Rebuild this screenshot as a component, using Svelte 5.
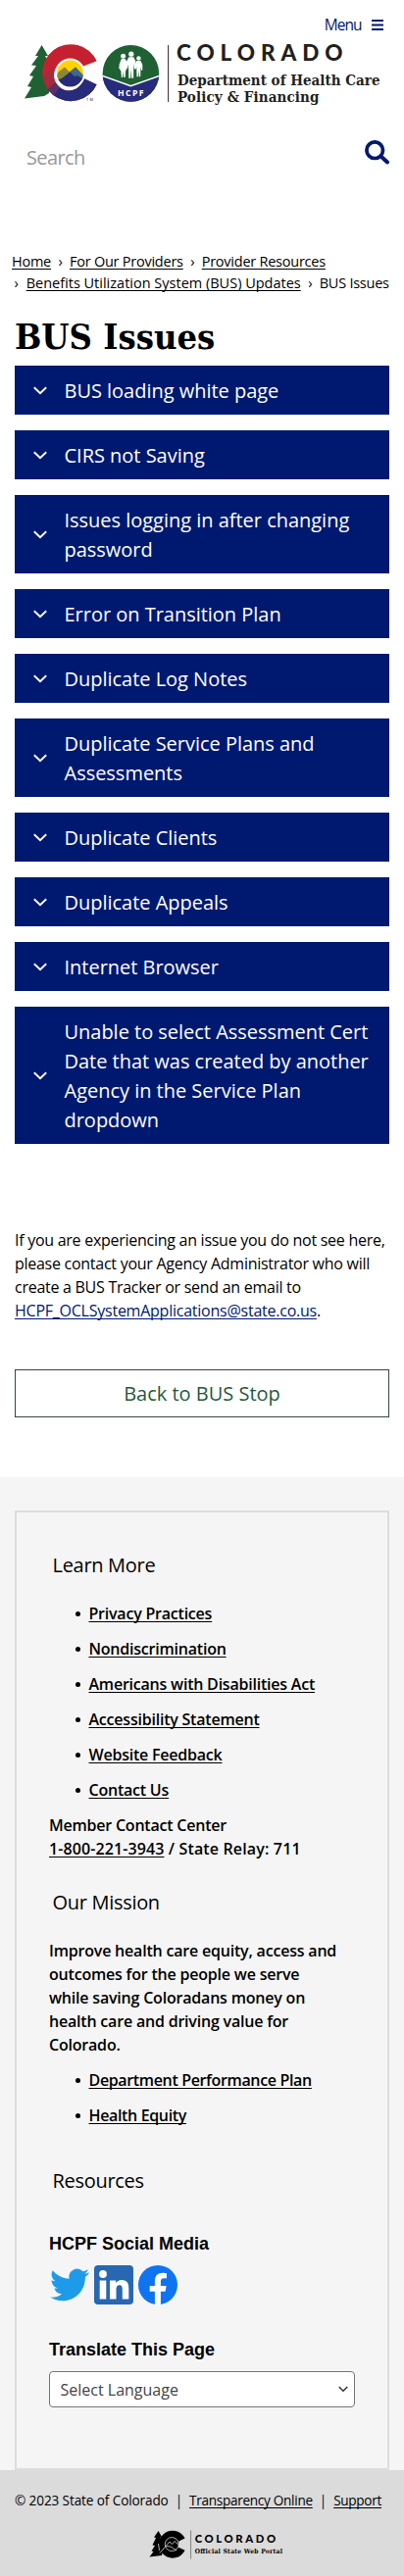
<script>
  const issues = [
    'BUS loading white page',
    'CIRS not Saving',
    'Issues logging in after changing password',
    'Error on Transition Plan',
    'Duplicate Log Notes',
    'Duplicate Service Plans and Assessments',
    'Duplicate Clients',
    'Duplicate Appeals',
    'Internet Browser',
    'Unable to select Assessment Cert Date that was created by another Agency in the Service Plan dropdown'
  ];
  const links = [
    'Privacy Practices',
    'Nondiscrimination',
    'Americans with Disabilities Act',
    'Accessibility Statement',
    'Website Feedback',
    'Contact Us'
  ];
  const missionLinks = ['Department Performance Plan', 'Health Equity'];
</script>

<header>
  <button class="menu">
    Menu
    <svg width="12" height="11" viewBox="0 0 12 11"><path d="M0 1h12M0 5.5h12M0 10h12" stroke="#001970" stroke-width="1.9" /></svg>
  </button>

  <svg class="logo" width="366" height="62" viewBox="25 45 366 62" role="img" aria-label="Colorado Department of Health Care Policy and Financing">
    <path d="M42.6 46 L49 57 L46 57 L51 66 L48 67 L52 78 L50 95 L45 98 L25 100.5 L32 89 L28 88 L34 78 L30 77 L37 67 L32 66.5 L39 57 L36 57Z" fill="#1f6132" />
    <clipPath id="cshape"><path d="M98.7 62.3 A29 29 0 1 0 98.6 86.2 L85.5 80 A15.4 15.4 0 1 1 83 68.2Z" /></clipPath>
    <g clip-path="url(#cshape)">
      <rect x="40" y="44" width="62" height="62" fill="#c5202f" />
      <path d="M42 79 L52 70 L62 82 L48 94 L40 98Z" fill="#a62b3c" />
      <path d="M45 95 L60 81 L72 74 L102 74 V106 H45Z" fill="#272b7c" />
      <path d="M45 95 L58 83 L62 88 L52 101Z" fill="#5a3068" />
    </g>
    <clipPath id="sun"><circle cx="71.5" cy="74.9" r="13.4" /></clipPath>
    <circle cx="71.5" cy="74.9" r="15.4" fill="#fff" />
    <g clip-path="url(#sun)">
      <rect x="57" y="60" width="30" height="30" fill="#ffd200" />
      <path d="M56 80 L60 73 L66 68.5 L71 73.5 L77 68.5 L87 79 V90 H56Z" fill="#8d8735" />
      <path d="M70 74 L77 68.5 L87 79 V84 L76 80Z" fill="#3f6b85" />
      <path d="M57 82 L63 80 L71.5 73.5 L76 78 L79 77 L87 82 V90 H57Z" fill="#272b7c" />
    </g>
    <text x="88" y="102.5" font-size="4" textLength="7" fill="#222">TM</text>

    <clipPath id="badge"><circle cx="133.4" cy="74.9" r="28.8" /></clipPath>
    <g clip-path="url(#badge)">
      <rect x="104" y="45" width="60" height="60" fill="#1f6132" />
      <path d="M104 77.5 L133.4 88 L163 77.5 V105 H104Z" fill="#272b7c" />
      <path d="M104 77.3 L133.4 87.7 L163 77.3" fill="none" stroke="#fff" stroke-width="1.5" />
      <g fill="#fff">
        <circle cx="125.6" cy="57.2" r="2.5" /><circle cx="133.8" cy="55.2" r="2.6" /><circle cx="141.4" cy="59.4" r="2.2" />
        <path d="M123.8 60 h3.8 l3 5 -1 5.5 -1.3 -1 -.6-2.5 1.3 4.5 -.9 .5 -.4 7 h-1.3 l-.6-6 -.6 6 h-1.3 l-.6-7 -1-.5 1.2-4.5 -1 3.5 -1.2-.5 .4-4.5Z" />
        <path d="M131.3 58.3 h5 l2.2 4.5 v7.2 l-1.5 .6 -.7-5.5 -.2 14.7 h-1.9 l-.5-9 -.5 9 h-1.9 l-.3-14.7 -.9 4.7 -1.2-.8 .3-6.5Z" />
        <path d="M139.4 62 h4 l1.9 4 v5.5 l-1.2 .3 -.6-3.5 -.3 10 h-1.4 l-.4-6.5 -.5 6.5 h-1.4 l-.3-10.5 -.7 3 -.8-.5 .3-4.8Z" />
      </g>
    </g>
    <text x="120" y="97.5" font-size="8.6" font-weight="700" textLength="26.5" fill="#fff">HCPF</text>
    <path d="M171.6 46 V104" stroke="#3a2024" stroke-width="1" />
    <text class="brand" x="180" y="62.3" font-size="22.5" textLength="169.5" fill="#231f20">COLORADO</text>
    <g class="slab" font-size="15" fill="#231f20">
      <text x="181" y="86.8" textLength="206.5">Department of Health Care</text>
      <text x="181" y="103.9" textLength="144.5">Policy &amp; Financing</text>
    </g>
  </svg>

  <form class="search">
    <input placeholder="Search" aria-label="Search" />
    <svg width="25" height="25" viewBox="0 0 25 25"><circle cx="10.2" cy="10.2" r="8.3" fill="none" stroke="#001970" stroke-width="3.7" /><path d="M16.5 16.5 L23 22.5" stroke="#001970" stroke-width="4" stroke-linecap="round" /></svg>
  </form>
</header>

<main>
  <nav>
    <div><a href="#top">Home</a><i>›</i><a href="#top">For Our Providers</a><i>›</i><a href="#top">Provider Resources</a></div>
    <div><i class="lead">›</i><a href="#top" class="long">Benefits Utilization System (BUS) Updates</a><i>›</i><span>BUS Issues</span></div>
  </nav>

  <h1>BUS Issues</h1>

  <div class="accordion">
    {#each issues as issue}
      <button class="item">
        <svg width="14" height="9" viewBox="0 0 14 9"><path d="M.8 1.2 L7 7.2 L13.2 1.2" fill="none" stroke="#fff" stroke-width="1.9" /></svg>
        <span>{issue}</span>
      </button>
    {/each}
  </div>

  <p class="help">If you are experiencing an issue you do not see here, please contact your Agency Administrator who will create a BUS Tracker or send an email to <a href="#top">HCPF_OCLSystemApplications@state.co.us</a>.</p>

  <a class="back" href="#top">Back to BUS Stop</a>
</main>

<footer>
  <div class="panel">
    <h2>Learn More</h2>
    <ul>{#each links as l}<li><a href="#top">{l}</a></li>{/each}</ul>
    <p class="contact">Member Contact Center<br /><a href="#top">1-800-221-3943</a> / State Relay: 711</p>
    <h2 class="mission">Our Mission</h2>
    <p class="statement">Improve health care equity, access and outcomes for the people we serve while saving Coloradans money on health care and driving value for Colorado.</p>
    <ul class="short">{#each missionLinks as l}<li><a href="#top">{l}</a></li>{/each}</ul>
    <h2 class="resources">Resources</h2>
    <h3>HCPF Social Media</h3>
    <div class="social">
      <svg width="40" height="40" viewBox="0 0 24 24"><path fill="#1d9bea" d="M23.95 4.57a10 10 0 0 1-2.82.77 4.96 4.96 0 0 0 2.16-2.72c-.95.55-2 .95-3.13 1.18a4.92 4.92 0 0 0-8.38 4.48C7.69 8.1 4.07 6.13 1.64 3.16a4.92 4.92 0 0 0 1.52 6.57 4.9 4.9 0 0 1-2.23-.61v.06c0 2.38 1.7 4.37 3.95 4.82a5 5 0 0 1-2.21.09 4.94 4.94 0 0 0 4.6 3.42A9.87 9.87 0 0 1 0 19.54a13.99 13.99 0 0 0 7.55 2.21c9.05 0 14-7.5 14-13.98 0-.21 0-.42-.02-.63a9.94 9.94 0 0 0 2.46-2.55z" /></svg>
      <svg width="40" height="40" viewBox="0 0 40 40"><rect width="40" height="40" rx="4" fill="#2867b2" /><circle cx="9" cy="9" r="3.9" fill="#fff" /><path fill="#fff" d="M5.7 15.5h6.6v19H5.7zM16 15.5h6.2v2.7c1-1.7 3-3.1 5.9-3.1 5.8 0 7.2 3.8 7.2 8.8v10.6h-6.5v-9.4c0-2.4-.2-4.9-2.9-4.9s-3.4 2.2-3.4 4.8v9.5H16z" /></svg>
      <svg width="40" height="40" viewBox="0 0 40 40"><circle cx="20" cy="20" r="20" fill="#0f74f2" /><path fill="#fff" d="M16.9 40V26.8h-5.2v-5.9h5.2v-4.6c0-5.7 3.2-8.5 7.9-8.5 1.7 0 3.4.2 4.2.4v5h-2.7c-2.7 0-3.4 1.4-3.4 3.3v4.4h5.7l-1 5.9h-4.7V40z" /></svg>
    </div>
    <h3>Translate This Page</h3>
    <div class="select">
      <span>Select Language</span>
      <svg width="10" height="7" viewBox="0 0 10 7"><path d="M.8 1 L5 5.2 L9.2 1" fill="none" stroke="#333" stroke-width="1.5" /></svg>
    </div>
  </div>
  <div class="bottom">
    <div class="legal"><span>© 2023 State of Colorado</span><b>|</b><a href="#top">Transparency Online</a><b>|</b><a href="#top">Support</a></div>
    <svg width="144" height="30" viewBox="152 2581 144 30" role="img" aria-label="Colorado Official State Web Portal">
      <path d="M161.5 2582 L165 2588 L163.5 2588 L167 2597 L165 2607 L152.5 2608.5 L156.5 2603 L154.5 2602.5 L158 2597 L155.5 2596.5 L159 2589 L157 2588.5Z" />
      <path d="M188.6 2589.5 A14 14 0 1 0 188.6 2601.8 L181.5 2598.5 L182.5 2592.5Z" />
      <circle cx="175.3" cy="2595.6" r="7" fill="#000" stroke="#dbdbdb" stroke-width=".8" />
      <path d="M161.5 2595 L162.5 2602 M163 2604.5 L173 2593 L175.5 2595.5 L178 2592.5 L182 2596 M169 2597.5 L174 2598 L180 2602" fill="none" stroke="#dbdbdb" stroke-width=".8" />
      <path d="M194.6 2581.5 V2610.5" stroke="#777" stroke-width=".9" />
      <text class="brand" x="198.7" y="2594" font-size="11.3" textLength="82.5">COLORADO</text>
      <text class="slab" x="198.7" y="2605.4" font-size="6.7" textLength="89.3">Official State Web Portal</text>
    </svg>
  </div>
</footer>

<style>
  :global(body) { background: #fff; color: #000; font-family: "Open Sans", sans-serif; }
  button, input { font: inherit; border: 0; background: none; padding: 0; margin: 0; outline: 0; }
  a { color: inherit; text-underline-offset: 2px; text-decoration-thickness: 1px; text-decoration-skip-ink: none; }
  h1, h2, h3, p, ul { margin: 0; padding: 0; }
  svg { display: block; flex: none; }
  text { font-family: "Open Sans", sans-serif; }
  .brand { font-family: Lato, sans-serif; font-weight: 900; }
  .slab, .slab text { font-family: "DejaVu Serif Condensed", "DejaVu Serif", serif; font-weight: 700; }

  header { display: flex; flex-direction: column; height: 256px; box-sizing: border-box; padding: 13px 15px 0; }
  .menu { align-self: flex-end; display: flex; align-items: center; gap: 10.5px; margin-right: 6px; height: 24px; color: #001970; font-size: 15.5px; letter-spacing: -1px; }
  .logo { margin: 8px 0 0 10px; overflow: visible; }
  .search { display: flex; justify-content: space-between; margin-top: 36px; height: 36px; }
  .search input { width: 260px; padding: 0 0 1px 12px; height: 34px; font-size: 20px; letter-spacing: -.6px; color: #333; }
  .search input::placeholder { color: #999; opacity: 1; }

  main { padding: 0 15px; }
  nav { margin: 0 -10px 0 -3px; font-size: 14.5px; line-height: 22px; letter-spacing: -.24px; white-space: nowrap; }
  nav i { font-style: normal; margin: 0 7.3px 0 7.5px; }
  nav i.lead { margin: 0 8px 0 2.5px; }
  .long { letter-spacing: 0; }
  h1 { margin: 25.4px 0 12.1px 0; font: 700 36px/36px "DejaVu Serif Condensed", "DejaVu Serif", serif; }
  .accordion { display: flex; flex-direction: column; gap: 16px; }
  .item { display: flex; align-items: center; gap: 17.5px; padding: 10px 10px 10px 19px; background: #001970; color: #fff; text-align: left; font-size: 20px; line-height: 30px; letter-spacing: -.02px; }
  .item span { padding-top: 1px; margin-bottom: -1px; }
  .help { margin: 85.5px -5px 48.3px 0; font-size: 16px; line-height: 24px; letter-spacing: -.27px; }
  .help a { color: #001970; letter-spacing: -.24px; }
  .back { display: flex; height: 49px; box-sizing: border-box; align-items: center; justify-content: center; border: 1px solid #35463c; color: #1f5a3c; font-size: 20px; text-decoration: none; }

  footer { margin-top: 60.7px; padding-top: 34.3px; background: #f5f5f5; }
  .panel { box-sizing: border-box; height: 979px; margin: 0 15px; padding: 39px 33px 0; border: 2px solid #ddd; font-size: 16px; line-height: 24px; font-weight: 600; letter-spacing: -.22px; }
  h2 { margin-left: 3.5px; font-size: 20px; line-height: 30px; font-weight: 400; letter-spacing: -.3px; }
  .panel ul { margin: 22px 0 0; padding-left: 27px; display: grid; gap: 12px; list-style: none; }
  li { display: flex; align-items: center; gap: 8.5px; }
  li::before { content: ""; width: 5px; height: 5px; border-radius: 50%; background: #000; }
  .short li { letter-spacing: -.35px; }
  .contact { margin-top: 12px; letter-spacing: .15px; }
  .contact a { letter-spacing: .1px; }
  .contact::first-line { letter-spacing: -.22px; }
  .mission { margin-top: 27.5px; }
  .statement { margin: 22.5px 15px 0 0; letter-spacing: -.2px; }
  .panel ul.short { margin-top: 12px; }
  .resources { margin-top: 40px; }
  h3 { font: 700 18px/24px "Liberation Sans", Arial, sans-serif; letter-spacing: 0; margin-top: 37px; }
  .social { display: flex; gap: 5px; margin: 10px 0 0 .5px; }
  .social + h3 { margin-top: 34px; }
  .select { box-sizing: border-box; width: 312px; height: 37px; margin-top: 10px; padding: 0 6px 0 10.5px; display: flex; align-items: center; justify-content: space-between; border: 1px solid #767676; border-radius: 4px; background: #fff; color: #444; font-weight: 400; letter-spacing: 0; }
  .bottom { height: 108px; box-sizing: border-box; padding-top: 20px; background: #dbdbdb; }
  .legal { padding-left: 15px; display: flex; font-size: 13.6px; line-height: 22px; letter-spacing: -.12px; white-space: nowrap; }
  .legal a { letter-spacing: -.3px; }
  .legal b { font-weight: 400; margin: 0 7px 0 7px; }
  .bottom svg { margin: 19px 0 0 152px; overflow: visible; }
</style>
